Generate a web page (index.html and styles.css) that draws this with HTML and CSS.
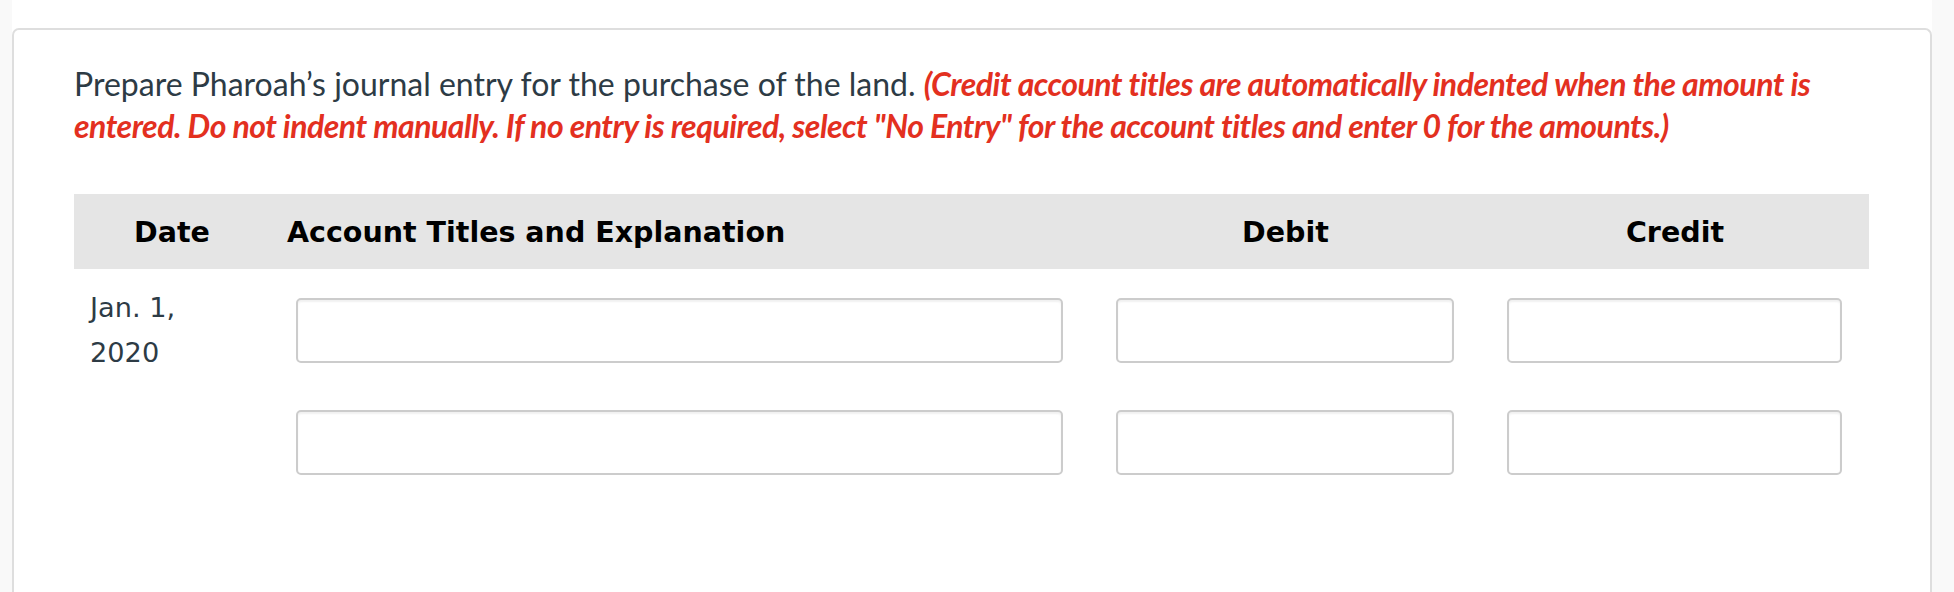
FILE: index.html
```html
<!DOCTYPE html>
<html lang="en">
<head>
<meta charset="utf-8">
<title>Journal entry</title>
<link rel="stylesheet" href="styles.css">
</head>
<body>
<div class="page">
  <div class="card">
    <p class="question">Prepare Pharoah’s journal entry for the purchase of the land. <em class="note">(Credit account titles are automatically indented when the amount is entered. Do not indent manually. If no entry is required, select "No Entry" for the account titles and enter 0 for the amounts.)</em></p>
    <div class="journal">
      <div class="head">
        <div class="h-date">Date</div>
        <div class="h-acct">Account Titles and Explanation</div>
        <div class="h-num">Debit</div>
        <div class="h-num">Credit</div>
      </div>
      <div class="row">
        <div class="date">Jan. 1,<br>2020</div>
        <div class="cell acct"><input class="field" type="text"></div>
        <div class="cell"><input class="field" type="text"></div>
        <div class="cell"><input class="field" type="text"></div>
      </div>
      <div class="row">
        <div class="date"></div>
        <div class="cell acct"><input class="field" type="text"></div>
        <div class="cell"><input class="field" type="text"></div>
        <div class="cell"><input class="field" type="text"></div>
      </div>
    </div>
  </div>
</div>
</body>
</html>
```

FILE: styles.css
```css
html, body {
  margin: 0;
  padding: 0;
}
body {
  background: #f9f9f9;
  height: 592px;
  overflow: hidden;
}
.page {
  margin: 0 22px 0 12px;
  background: #ffffff;
  padding-top: 28px;
  height: 564px;
}
.card {
  border: 2px solid #dedede;
  border-bottom: none;
  border-radius: 7px 7px 0 0;
  padding: 33px 61px 0 60px;
  height: 600px;
}
.question {
  margin: 0;
  font-family: Lato, "Open Sans", sans-serif;
  font-size: 32px;
  line-height: 42px;
  color: #2d3b45;
}
.note {
  font-style: italic;
  font-weight: 700;
  color: #e3301f;
  letter-spacing: -0.5px;
}
.journal {
  margin-top: 47px;
  font-family: "DejaVu Sans", Verdana, sans-serif;
  font-size: 27.2px;
}
.head, .row {
  display: grid;
  grid-template-columns: 196px 820px 391px 388px;
}
.head {
  background: #e5e5e5;
  height: 75px;
  align-items: center;
  font-weight: 700;
  font-size: 28.5px;
  color: #000;
  padding-top: 2px;
  box-sizing: border-box;
}
.h-date {
  text-align: center;
}
.h-acct {
  padding-left: 17px;
}
.h-num {
  text-align: center;
}
.row {
  box-sizing: border-box;
  height: 112px;
  padding-top: 29px;
  align-items: start;
}
.date {
  padding-left: 16px;
  color: #2d3b45;
  line-height: 45px;
  margin-top: -13px;
}
.cell {
  padding: 0 27px 0 26px;
}
.field {
  display: block;
  box-sizing: border-box;
  width: 100%;
  height: 65px;
  margin: 0;
  border: 2px solid #cccccc;
  border-radius: 5px;
  background: #fff;
  box-shadow: inset 0 2px 2px rgba(0,0,0,0.06);
  outline: none;
}
```
